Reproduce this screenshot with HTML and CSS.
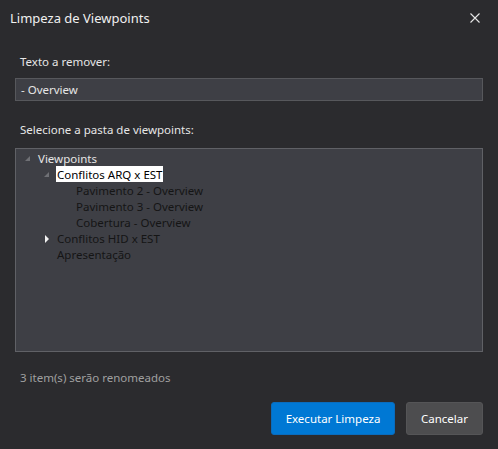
FILE: index.html
```html
<!DOCTYPE html>
<html lang="pt">
<head>
    <meta charset="UTF-8">
    <title>Limpeza de Viewpoints</title>
    <link rel="stylesheet" href="styles.css">
</head>
<body>
    <div class="dialog">
        <div class="title-bar">
            <span class="title">Limpeza de Viewpoints</span>
            <button class="close-button" aria-label="Fechar">
                <svg width="10" height="10" viewBox="0 0 10 10">
                    <path d="M0.5 0.5 L9.5 9.5 M9.5 0.5 L0.5 9.5" stroke="#e6e6e6" stroke-width="1.1" fill="none"/>
                </svg>
            </button>
        </div>

        <div class="content">
            <label class="field-label">Texto a remover:</label>
            <div class="text-input">- Overview</div>

            <label class="field-label folder-label">Selecione a pasta de viewpoints:</label>
            <div class="tree">
                <div class="tree-row level-0">
                    <span class="expander expanded"></span>
                    <span class="tree-text root">Viewpoints</span>
                </div>
                <div class="tree-row level-1">
                    <span class="expander expanded"></span>
                    <span class="tree-text selected">Conflitos ARQ x EST</span>
                </div>
                <div class="tree-row level-2">
                    <span class="expander"></span>
                    <span class="tree-text">Pavimento 2 - Overview</span>
                </div>
                <div class="tree-row level-2">
                    <span class="expander"></span>
                    <span class="tree-text">Pavimento 3 - Overview</span>
                </div>
                <div class="tree-row level-2">
                    <span class="expander"></span>
                    <span class="tree-text">Cobertura - Overview</span>
                </div>
                <div class="tree-row level-1">
                    <span class="expander collapsed"></span>
                    <span class="tree-text">Conflitos HID x EST</span>
                </div>
                <div class="tree-row level-1">
                    <span class="expander"></span>
                    <span class="tree-text">Apresentação</span>
                </div>
            </div>

            <div class="status">3 item(s) serão renomeados</div>

            <div class="actions">
                <button class="btn btn-primary">Executar Limpeza</button>
                <button class="btn btn-secondary">Cancelar</button>
            </div>
        </div>
    </div>
</body>
</html>
```

FILE: styles.css
```css
* {
    margin: 0;
    padding: 0;
    box-sizing: border-box;
}

body {
    width: 498px;
    height: 449px;
    background: #2b2b2e;
    font-family: "Noto Sans", "Open Sans", sans-serif;
    font-size: 11.5px;
    color: #e6e6e6;
    overflow: hidden;
}

.dialog {
    display: flex;
    flex-direction: column;
    height: 100%;
}

.title-bar {
    height: 35px;
    display: flex;
    align-items: center;
    justify-content: space-between;
    padding: 0 18px 0 10px;
}

.title {
    font-size: 13px;
    color: #f0f0f0;
}

.close-button {
    background: none;
    border: none;
    width: 10px;
    height: 10px;
    display: flex;
}

.content {
    padding: 17px 15px 0 15px;
    display: flex;
    flex-direction: column;
}

.field-label {
    display: block;
    padding-left: 5px;
    line-height: 19px;
    height: 26px;
    color: #e6e6e6;
}

.folder-label {
    margin-top: 19px;
    height: 28px;
}

.text-input {
    height: 23px;
    background: #3e3f45;
    border: 1px solid #57585c;
    padding: 1px 0 0 5px;
    line-height: 20px;
    color: #e6e6e6;
}

.tree {
    height: 204px;
    background: #3e3f45;
    border: 1px solid #606166;
    padding: 1px 0;
}

.tree-row {
    display: flex;
    align-items: center;
    height: 16px;
}

.level-0 { padding-left: 4px; }
.level-1 { padding-left: 23px; }
.level-2 { padding-left: 42px; }

.expander {
    width: 17px;
    height: 16px;
    position: relative;
    flex-shrink: 0;
}

.expander.expanded::before {
    content: "";
    position: absolute;
    left: 5px;
    top: 6px;
    width: 0;
    height: 0;
    border-style: solid;
    border-width: 0 0 5px 5px;
    border-color: transparent transparent #6f7075 transparent;
}

.expander.collapsed::before {
    content: "";
    position: absolute;
    left: 6px;
    top: 5px;
    width: 0;
    height: 0;
    border-style: solid;
    border-width: 4px 0 4px 4px;
    border-color: transparent transparent transparent #f2f2f2;
}

.tree-text {
    padding: 1px 1px 0 1px;
    line-height: 15px;
    height: 16px;
    color: #151515;
    white-space: nowrap;
}

.tree-text.root {
    color: #e6e6e6;
}

.tree-text.selected {
    background: #ffffff;
    color: #000000;
}

.status {
    margin-top: 17px;
    padding-left: 5px;
    line-height: 18px;
    color: #a0a0a0;
}

.actions {
    display: flex;
    justify-content: flex-end;
    gap: 11px;
    margin-top: 15px;
}

.btn {
    height: 33px;
    border-radius: 3px;
    font-family: inherit;
    font-size: 11.5px;
    color: #ffffff;
    border: 1px solid transparent;
}

.btn-primary {
    width: 124px;
    background: #0078d4;
    border-color: #0a6cbd;
}

.btn-secondary {
    width: 77px;
    background: #4d4d4f;
    border-color: #555557;
}
```
